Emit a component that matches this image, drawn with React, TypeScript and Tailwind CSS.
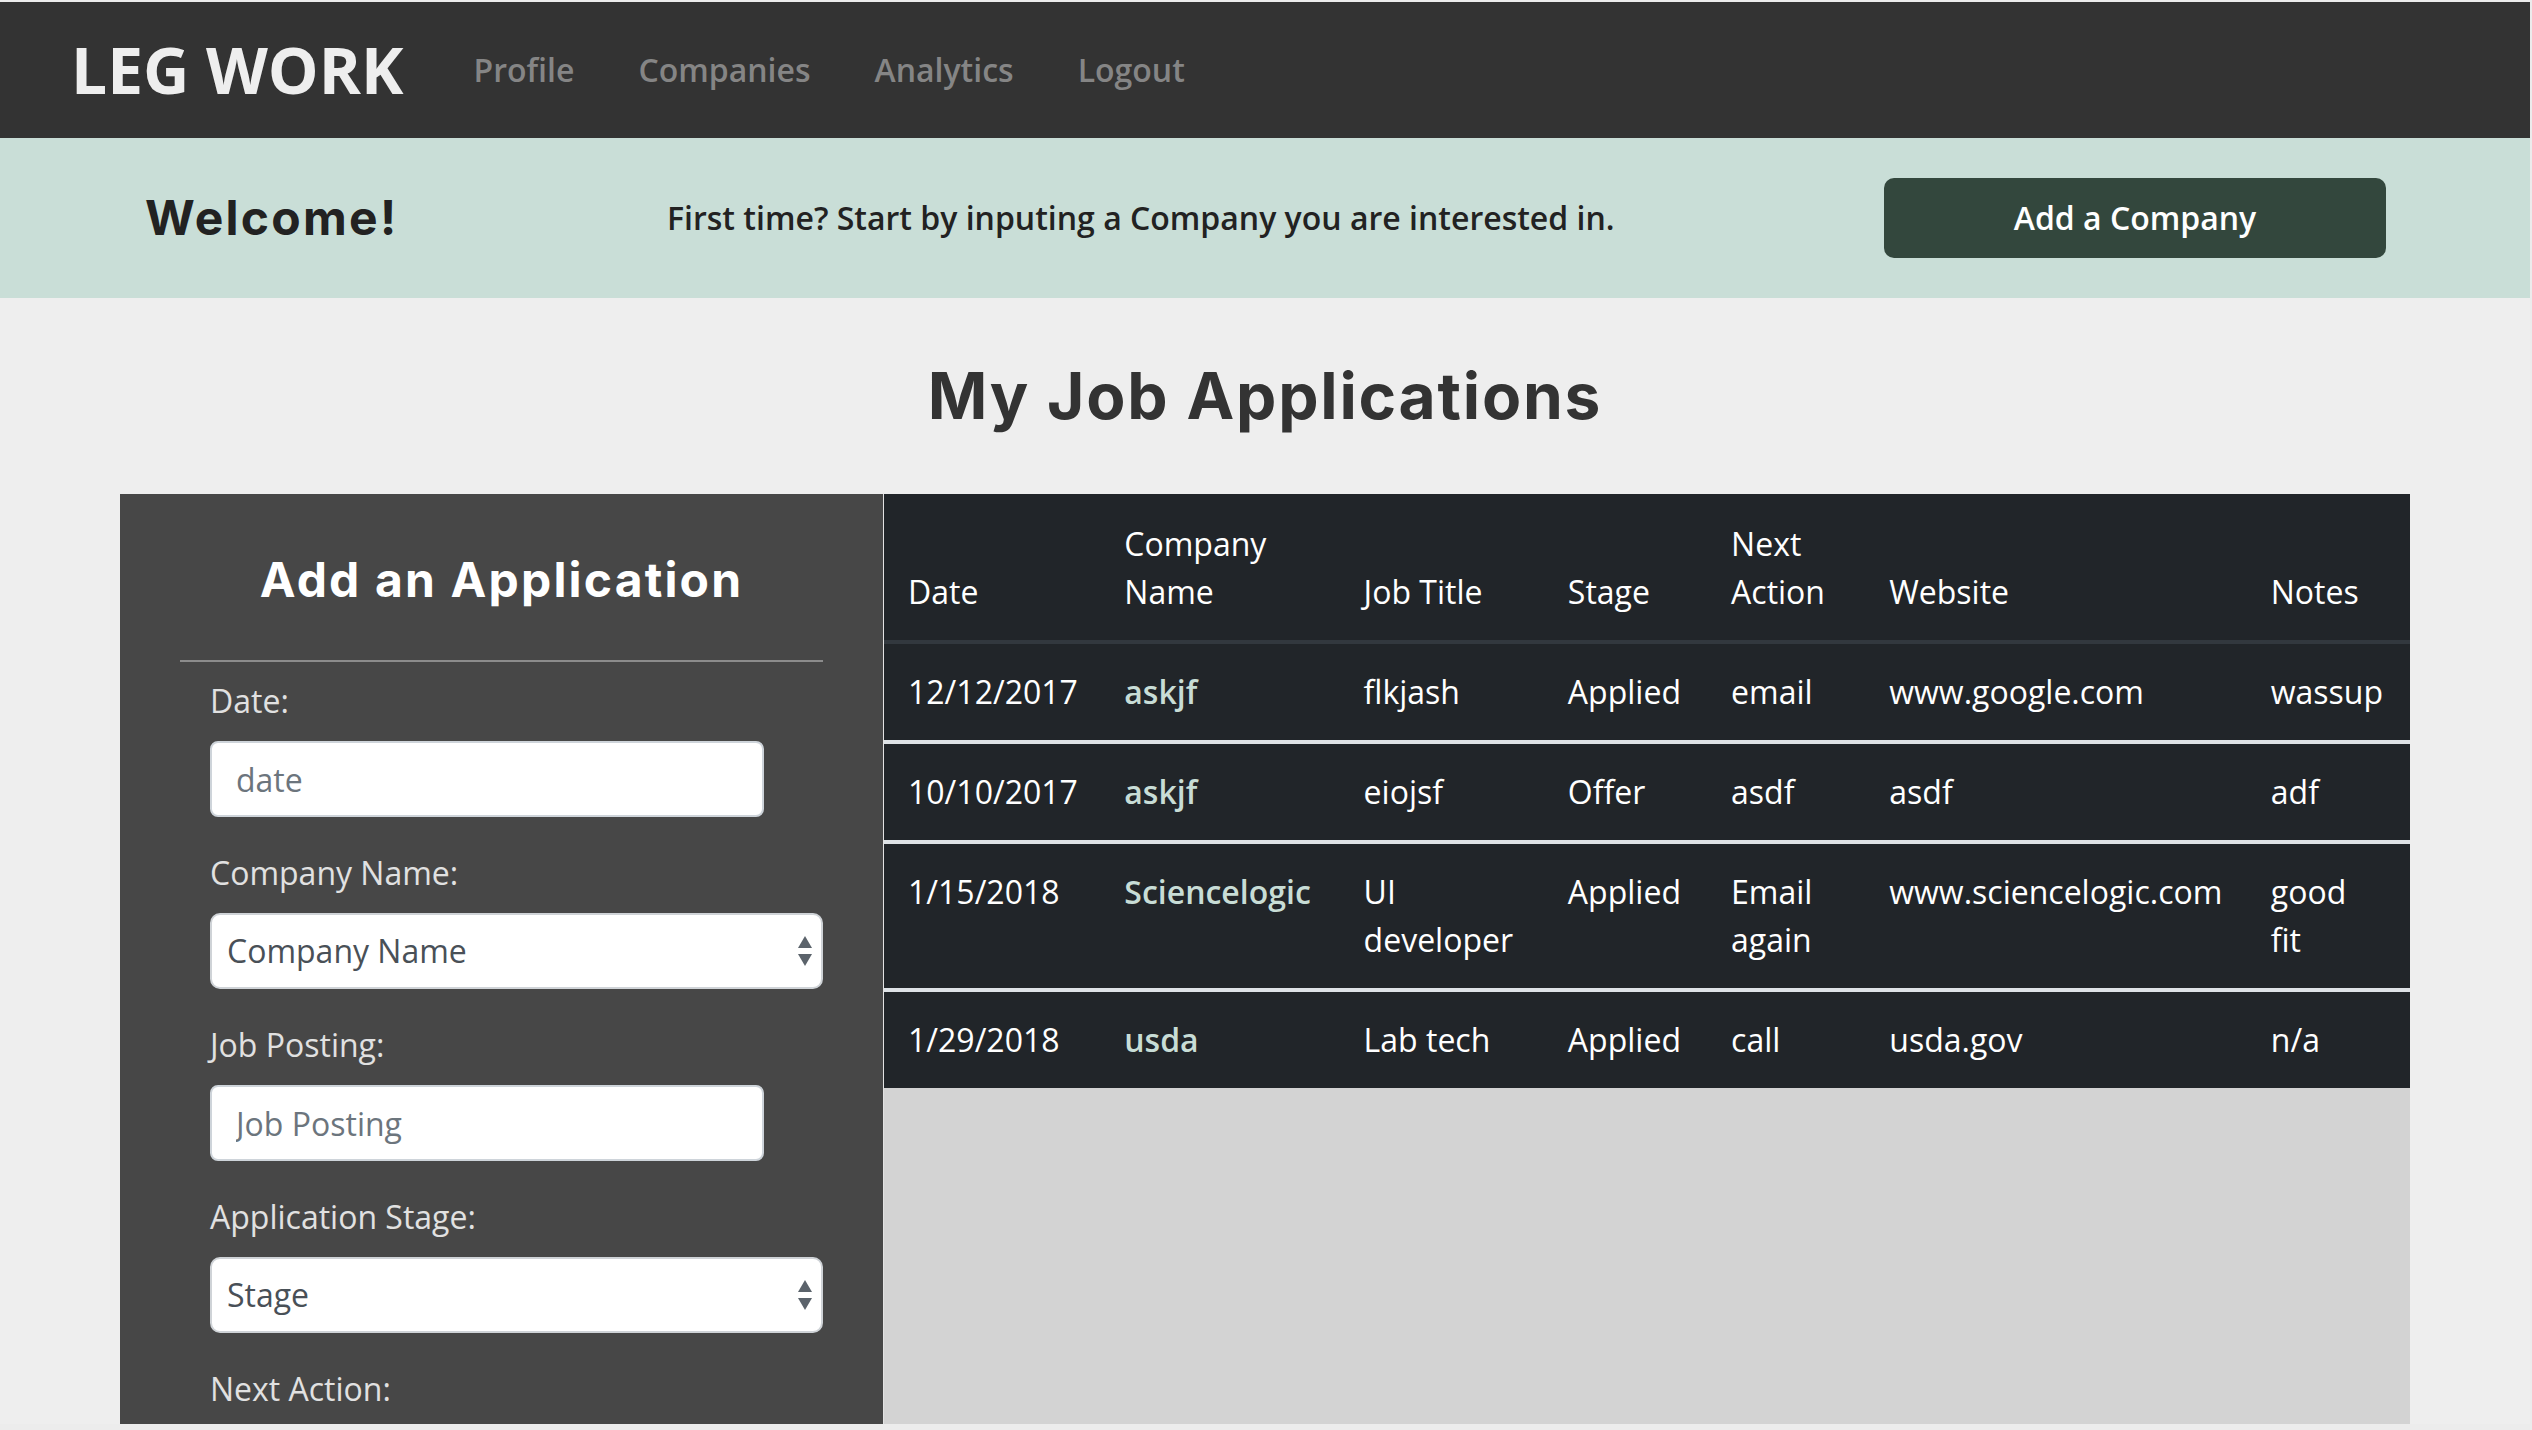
import React from "react";

const rows = [
  { date: "12/12/2017", company: "askjf", title: "flkjash", stage: "Applied", next: "email", site: "www.google.com", notes: "wassup" },
  { date: "10/10/2017", company: "askjf", title: "eiojsf", stage: "Offer", next: "asdf", site: "asdf", notes: "adf" },
  { date: "1/15/2018", company: "Sciencelogic", title: "UI developer", stage: "Applied", next: "Email again", site: "www.sciencelogic.com", notes: "good fit" },
  { date: "1/29/2018", company: "usda", title: "Lab tech", stage: "Applied", next: "call", site: "usda.gov", notes: "n/a" },
];

const SelectArrows = () => (
  <svg width="16" height="32" viewBox="0 0 16 32">
    <path d="M8 1 L15 13 L1 13 Z" fill="#5b636b" />
    <path d="M1 19 L15 19 L8 31 Z" fill="#5b636b" />
  </svg>
);

const FakeSelect = ({ value }: { value: string }) => (
  <div className="flex h-[76px] w-full items-center justify-between rounded-[10px] border-2 border-[#cfd3d7] bg-white pl-[15px] pr-[8px] text-[32px] text-[#495057]">
    <span>{value}</span>
    <SelectArrows />
  </div>
);

const TextInput = ({ placeholder }: { placeholder: string }) => (
  <input
    readOnly
    placeholder={placeholder}
    className="block h-[76px] w-[554px] rounded-[8px] border-2 border-[#ced4da] bg-white px-[24px] text-[32px] text-[#495057] outline-none placeholder:text-[#6c757d]"
  />
);

const Field = ({ label, children }: { label: string; children: React.ReactNode }) => (
  <div className="mb-[32px]">
    <label className="mb-4 block text-[32px] leading-[48px] text-[#e1e1e1]">{label}</label>
    {children}
  </div>
);

export default function App() {
  return (
    <div className="h-[1430px] w-[2532px] overflow-hidden border-t-2 border-r-2 border-b-[6px] border-[#ececec] bg-[#eeeeee] font-['Open_Sans',sans-serif]">
      {/* navbar */}
      <nav className="flex h-[136px] items-center bg-[#333333] pl-[71px]">
        <span className="mr-[38px] text-[64px] font-bold leading-none text-[#eeeeee]">LEG WORK</span>
        {["Profile", "Companies", "Analytics", "Logout"].map((l) => (
          <a key={l} className="px-8 text-[32px] font-semibold leading-none text-[#858585]">
            {l}
          </a>
        ))}
      </nav>

      {/* welcome banner */}
      <div className="flex h-[160px] items-center bg-[#c9ded7]">
        <h2 className="ml-[145px] w-[522px] font-['Inter',sans-serif] text-[48px] font-bold leading-none tracking-[0.047em] text-[#222222]">
          Welcome!
        </h2>
        <p className="text-[32px] font-semibold leading-none text-[#222222]">
          First time? Start by inputing a Company you are interested in.
        </p>
        <button className="ml-auto mr-[144px] h-[80px] w-[502px] rounded-[10px] bg-[#33473d] text-[32px] font-semibold leading-none text-white">
          Add a Company
        </button>
      </div>

      <h1 className="mt-[66px] mb-[66px] text-center font-['Inter',sans-serif] text-[64px] font-bold leading-none tracking-[0.028em] text-[#333333]">
        My Job Applications
      </h1>

      <div className="mx-auto flex h-[940px] w-[2290px]">
        {/* add application form */}
        <aside className="w-[763px] shrink-0 bg-[#474747] pt-[62px]">
          <h3 className="text-center font-['Inter',sans-serif] text-[48px] font-bold leading-none tracking-[0.045em] text-white">
            Add an Application
          </h3>
          <div className="mx-[60px] mt-[56px] mb-[15px] h-[2px] bg-[#8c8c8c]" />
          <div className="pl-[90px] pr-[60px]">
            <Field label="Date:">
              <TextInput placeholder="date" />
            </Field>
            <Field label="Company Name:">
              <FakeSelect value="Company Name" />
            </Field>
            <Field label="Job Posting:">
              <TextInput placeholder="Job Posting" />
            </Field>
            <Field label="Application Stage:">
              <FakeSelect value="Stage" />
            </Field>
            <Field label="Next Action:">
              <TextInput placeholder="Next Action" />
            </Field>
          </div>
        </aside>

        {/* applications table */}
        <section className="flex-1 border-l border-[#e2e2e2] bg-[#d3d3d3]">
          <table className="w-full table-fixed border-collapse bg-[#212529] text-left text-[32px] leading-[48px] text-white">
            <colgroup>
              <col className="w-[216px]" />
              <col className="w-[239px]" />
              <col className="w-[204px]" />
              <col className="w-[163px]" />
              <col className="w-[158px]" />
              <col className="w-[381px]" />
              <col className="w-[163px]" />
            </colgroup>
            <thead>
              <tr className="border-b-4 border-[#32383e]">
                {["Date", "Company Name", "Job Title", "Stage", "Next Action", "Website", "Notes"].map((h) => (
                  <th key={h} className="px-6 pt-[26px] pb-[24px] align-bottom font-normal">
                    {h}
                  </th>
                ))}
              </tr>
            </thead>
            <tbody>
              {rows.map((r, i) => (
                <tr key={i} className={i === 0 ? "" : "border-t-4 border-[#dee2e6]"}>
                  <td className="px-6 py-6 align-top">{r.date}</td>
                  <td className="px-6 py-6 align-top font-semibold text-[#c8ddd6]">{r.company}</td>
                  <td className="px-6 py-6 align-top">{r.title}</td>
                  <td className="px-6 py-6 align-top">{r.stage}</td>
                  <td className="px-6 py-6 align-top">{r.next}</td>
                  <td className="px-6 py-6 align-top">{r.site}</td>
                  <td className="py-6 pl-6 pr-[60px] align-top whitespace-normal">{r.notes}</td>
                </tr>
              ))}
            </tbody>
          </table>
        </section>
      </div>
    </div>
  );
}
